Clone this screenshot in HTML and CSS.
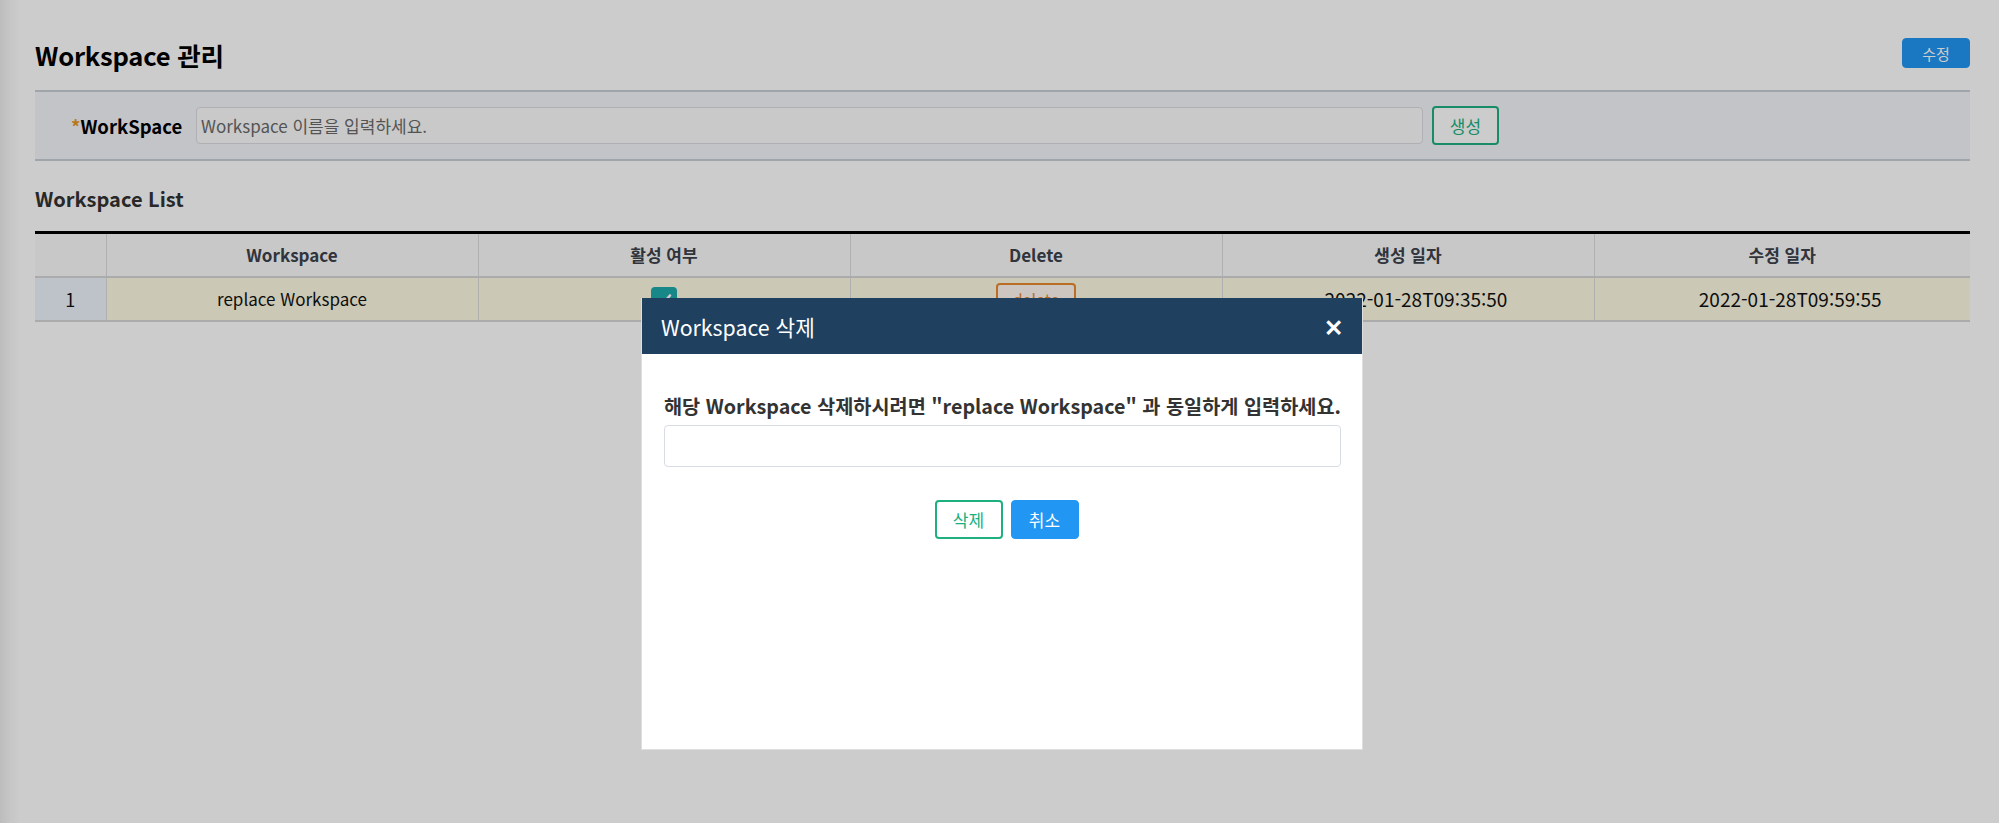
FILE: index.html
```html
<!DOCTYPE html>
<html lang="ko">
<head>
<meta charset="utf-8">
<title>Workspace 관리</title>
<link rel="stylesheet" href="styles.css">
</head>
<body>
<div class="page">
  <div class="title-row">
    <h1 class="page-title">Workspace 관리</h1>
    <button class="btn btn-blue btn-edit">수정</button>
  </div>
  <div class="form-panel">
    <label class="form-label"><span class="req">*</span>WorkSpace</label>
    <input class="form-input" type="text" placeholder="Workspace 이름을 입력하세요.">
    <button class="btn btn-outline-green btn-create">생성</button>
  </div>
  <h2 class="list-title">Workspace List</h2>
  <table class="ws-table">
    <colgroup>
      <col class="c-idx">
      <col class="c-mid">
      <col class="c-mid">
      <col class="c-mid">
      <col class="c-mid">
      <col>
    </colgroup>
    <thead>
      <tr>
        <th class="col-idx"></th>
        <th>Workspace</th>
        <th>활성 여부</th>
        <th>Delete</th>
        <th>생성 일자</th>
        <th>수정 일자</th>
      </tr>
    </thead>
    <tbody>
      <tr>
        <td class="col-idx">1</td>
        <td>replace Workspace</td>
        <td><span class="check"><svg viewBox="0 0 26 26" width="26" height="26"><path d="M7 13.5l4 4 8-9" fill="none" stroke="#fff" stroke-width="2.6" stroke-linecap="round" stroke-linejoin="round"/></svg></span></td>
        <td><button class="btn-delete">delete</button></td>
        <td class="date">2022-01-28T09:35:50</td>
        <td class="date">2022-01-28T09:59:55</td>
      </tr>
    </tbody>
  </table>
</div>
<div class="backdrop"></div>
<div class="modal">
  <div class="modal-header">
    <span class="modal-title">Workspace 삭제</span>
    <span class="modal-close">✕</span>
  </div>
  <div class="modal-body">
    <p class="modal-msg">해당 Workspace 삭제하시려면 "replace Workspace" 과 동일하게 입력하세요.</p>
    <input class="modal-input" type="text">
    <div class="modal-actions">
      <button class="btn btn-outline-green">삭제</button>
      <button class="btn btn-blue">취소</button>
    </div>
  </div>
</div>
</body>
</html>
```
FILE: styles.css
```css
* { box-sizing: border-box; }
html, body { margin: 0; height: 100%; }
body {
  font-family: "Noto Sans CJK KR", "Noto Sans", sans-serif;
  background: linear-gradient(to right, #ececec 0, #f8f8f8 10px, #ffffff 20px);
  color: #111;
  overflow: hidden;
}
.page {
  padding: 32px 29px 0 35px;
}
.title-row {
  display: flex;
  justify-content: space-between;
  align-items: center;
  height: 44px;
}
.page-title {
  margin: 0;
  font-size: 25.5px;
  font-weight: 700;
  color: #000;
  letter-spacing: -0.2px;
}
.btn {
  font-family: inherit;
  font-size: 15px;
  border-radius: 4px;
  cursor: pointer;
  padding: 0;
}
.btn-blue {
  background: #2196f3;
  color: #fff;
  border: 1px solid #2196f3;
  width: 68px;
  height: 39px;
}
.btn-edit {
  width: 68px;
  height: 30px;
  margin-top: -2px;
}
.btn-outline-green {
  background: #fff;
  color: #1aaf7f;
  border: 2px solid #1fb080;
  width: 68px;
  height: 39px;
}
.form-panel {
  margin-top: 14px;
  height: 71px;
  background: #f4f5fa;
  border-top: 2px solid #c8cdd6;
  border-bottom: 2px solid #c8cdd6;
  display: flex;
  align-items: center;
  padding-left: 36px;
}
.form-label {
  font-size: 18.5px;
  font-weight: 700;
  color: #000;
  width: 125px;
  flex: none;
}
.req { color: #e8951e; }
.form-input {
  width: 1227px;
  height: 37px;
  border: 1px solid #dcdde2;
  border-radius: 4px;
  background: #fcfcfc;
  font-family: inherit;
  font-size: 17px;
  padding: 0 4px;
  color: #111;
}
.form-input::placeholder { color: #6a6a6a; }
.btn-create {
  margin-left: 9px;
  font-size: 17px;
  width: 67px;
}
.list-title {
  margin: 23px 0 0;
  font-size: 20px;
  font-weight: 700;
  color: #333;
  line-height: 29px;
}
.ws-table {
  margin-top: 18px;
  width: 100%;
  border-collapse: collapse;
  border-top: 3px solid #000;
  table-layout: fixed;
}
.c-idx { width: 71px; }
.c-mid { width: 372px; }
.ws-table th, .ws-table td {
  text-align: center;
  border-left: 1px solid #dcdcdc;
  border-bottom: 2px solid #d6d6d6;
  padding: 0;
}
.ws-table th:first-child, .ws-table td:first-child { border-left: none; }
.ws-table th {
  height: 44px;
  background: #fafafa;
  font-size: 17px;
  font-weight: 700;
  color: #3c414c;
}
.ws-table td {
  height: 44px;
  background: #fefae3;
  font-size: 17px;
  color: #111;
}
.ws-table td.date { font-size: 19px; padding-left: 16px; }
.ws-table td.col-idx { background: #eef4fc; font-size: 18px; }
.check {
  display: inline-block;
  width: 26px;
  height: 26px;
  border-radius: 4px;
  background: #1ea9a9;
  vertical-align: middle;
}
.check svg { display: block; }
.btn-delete {
  width: 80px;
  height: 32px;
  background: #fff7f0;
  border: 2px solid #e9892f;
  border-radius: 4px;
  color: #e9892f;
  font-family: inherit;
  font-size: 16px;
  vertical-align: middle;
}
.backdrop {
  position: fixed;
  inset: 0;
  background: rgba(0, 0, 0, 0.2);
}
.modal {
  position: fixed;
  left: 641px;
  top: 298px;
  width: 722px;
  height: 452px;
  background: #fff;
  border: 1px solid #dedede;
  border-top: none;
}
.modal-header {
  height: 56px;
  background: #1f405f;
  display: flex;
  align-items: center;
  justify-content: space-between;
  padding: 0 19px 0 19px;
}
.modal-title {
  color: #fff;
  font-size: 21.3px;
}
.modal-close {
  color: #fff;
  font-size: 23px;
  font-weight: 700;
}
.modal-body {
  padding: 39px 21px 0 22px;
}
.modal-msg {
  margin: 0;
  font-size: 19.7px;
  font-weight: 700;
  color: #333;
  line-height: 26px;
}
.modal-input {
  margin-top: 6px;
  width: 100%;
  height: 42px;
  border: 1px solid #d8dde5;
  border-radius: 4px;
  font-family: inherit;
  font-size: 17px;
}
.modal-actions {
  margin-top: 33px;
  display: flex;
  justify-content: center;
  gap: 8px;
  padding-left: 8px;
}
.modal-actions .btn { font-size: 17px; }
```
